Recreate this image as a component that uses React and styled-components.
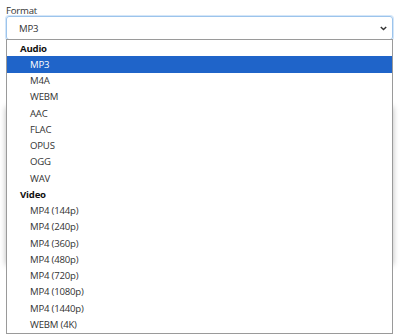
import styled, { createGlobalStyle } from 'styled-components'

const GlobalStyle = createGlobalStyle`
  html, body {
    margin: 0;
    background: #fff;
    font-family: "Open Sans", "Noto Sans", sans-serif;
    font-size: 9.6px;
    letter-spacing: -0.2px;
    color: #222;
  }
`

const groups = [
  { label: 'Audio', options: ['MP3', 'M4A', 'WEBM', 'AAC', 'FLAC', 'OPUS', 'OGG', 'WAV'] },
  {
    label: 'Video',
    options: ['MP4 (144p)', 'MP4 (240p)', 'MP4 (360p)', 'MP4 (480p)', 'MP4 (720p)', 'MP4 (1080p)', 'MP4 (1440p)', 'WEBM (4K)'],
  },
]

const Page = styled.div`
  padding: 5px 7px 0 6px;
  min-height: 336px;
  box-sizing: border-box;
`

const Label = styled.div`
  line-height: 11px;
  color: #333;
`

const Field = styled.div`
  position: relative;
`

const SelectBox = styled.div`
  height: 24px;
  box-sizing: border-box;
  border: 1px solid #9cc4ec;
  box-shadow: 0 0 0 1px #d4e6f8;
  border-radius: 3px;
  display: flex;
  align-items: center;
  justify-content: space-between;
  padding: 0 5px 0 12px;
  color: #333;
`

const Chevron = styled.svg`
  width: 7px;
  height: 5px;
`

const Card = styled.div`
  margin-top: 65px;
  height: 158px;
  background: #fff;
  box-shadow: 0 2px 6px rgba(0, 0, 0, 0.28);
`

const Listbox = styled.div`
  position: absolute;
  top: 23px;
  left: 0;
  right: 0;
  box-sizing: border-box;
  background: #fff;
  border: 1px solid #9a9a9a;
  z-index: 2;
`

const GroupLabel = styled.div`
  height: 16.25px;
  display: flex;
  align-items: center;
  padding-left: 13px;
  font-weight: 700;
  color: #111;
`

const Option = styled.div`
  height: 16.25px;
  display: flex;
  align-items: center;
  padding-left: 23px;
  color: ${({ $active }) => ($active ? '#fff' : '#333')};
  background: ${({ $active }) => ($active ? '#1f64c9' : 'transparent')};
`

export default function App() {
  return (
    <>
      <GlobalStyle />
      <Page>
        <Label>Format</Label>
        <Field>
          <SelectBox>
            <span>MP3</span>
            <Chevron viewBox="0 0 7 5">
              <path d="M0.8 0.9 L3.5 3.6 L6.2 0.9" fill="none" stroke="#333" strokeWidth="1.4" />
            </Chevron>
          </SelectBox>
          <Listbox>
            {groups.map((g) => (
              <div key={g.label}>
                <GroupLabel>{g.label}</GroupLabel>
                {g.options.map((o) => (
                  <Option key={o} $active={g.label === 'Audio' && o === 'MP3'}>{o}</Option>
                ))}
              </div>
            ))}
          </Listbox>
        </Field>
        <Card />
      </Page>
    </>
  )
}
